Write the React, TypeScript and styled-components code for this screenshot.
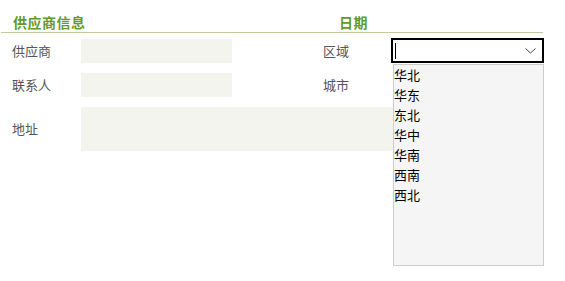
import React, { FC } from 'react'
import styled, { createGlobalStyle } from 'styled-components'

const GlobalStyle = createGlobalStyle`
	html, body {
		margin: 0;
		padding: 0;
		background: #ffffff;
	}
	body {
		font-family: "Noto Sans CJK SC", "Liberation Sans", sans-serif;
		font-size: 13px;
	}
`

const Page = styled.div`
	width: 565px;
	height: 281px;
	position: relative;
	overflow: hidden;
`

const Header = styled.div`
	display: flex;
	margin-left: 1px;
	width: 542px;
	padding-top: 14px;
	padding-bottom: 1px;
	border-bottom: 1px solid #c6c79d;
`

const SectionTitle = styled.div<{ width?: number }>`
	width: ${(props) => (props.width ? props.width + 'px' : 'auto')};
	padding-left: 12px;
	box-sizing: border-box;
	font-size: 14px;
	letter-spacing: 0.5px;
	font-weight: 700;
	line-height: 17px;
	color: #5f9b2c;
`

const Form = styled.div`
	display: grid;
	grid-template-columns: 69px 151px 91px 68px 153px;
	grid-template-rows: 24px 24px 44px;
	row-gap: 10px;
	padding-left: 12px;
	margin-top: 6px;
	align-items: center;
`

const Label = styled.div`
	color: #555555;
	font-size: 13px;
	line-height: 18px;
`

const Field = styled.div<{ span?: number }>`
	grid-column: span ${(props) => props.span || 1};
	align-self: stretch;
	background: #f4f4ef;
`

const SelectCell = styled.div`
	position: relative;
	align-self: stretch;
`

const SelectBox = styled.div`
	margin-top: -1px;
	height: 25px;
	box-sizing: border-box;
	border: 2px solid #000000;
	background: #ffffff;
	display: flex;
	align-items: center;
	justify-content: space-between;
	padding: 0 6px 0 2px;
`

const Caret = styled.div`
	width: 1px;
	height: 16px;
	background: #000000;
`

const Options = styled.ul`
	position: absolute;
	top: 25px;
	left: 2px;
	right: 0;
	height: 202px;
	box-sizing: border-box;
	margin: 0;
	padding: 0;
	list-style: none;
	background: #f5f5f5;
	border: 1px solid #cccccc;
	z-index: 10;
`

const Option = styled.li`
	height: 20px;
	line-height: 20px;
	color: #000000;
	font-size: 13px;
	padding-left: 0;
`

const regions = ['华北', '华东', '东北', '华中', '华南', '西南', '西北']

const App: FC = () => {
	return (
		<Page>
			<GlobalStyle />
			<Header>
				<SectionTitle width={326}>供应商信息</SectionTitle>
				<SectionTitle>日期</SectionTitle>
			</Header>
			<Form>
				<Label>供应商</Label>
				<Field />
				<div />
				<Label>区域</Label>
				<SelectCell>
					<SelectBox>
						<Caret />
						<svg width="11" height="6" viewBox="0 0 11 6">
							<path
								d="M0.5 0.5 L5.5 5 L10.5 0.5"
								fill="none"
								stroke="#444"
								strokeWidth="1"
							/>
						</svg>
					</SelectBox>
					<Options>
						{regions.map((r) => (
							<Option key={r}>{r}</Option>
						))}
					</Options>
				</SelectCell>

				<Label>联系人</Label>
				<Field />
				<div />
				<Label>城市</Label>
				<div />

				<Label>地址</Label>
				<Field span={4} />
			</Form>
		</Page>
	)
}

export default App
